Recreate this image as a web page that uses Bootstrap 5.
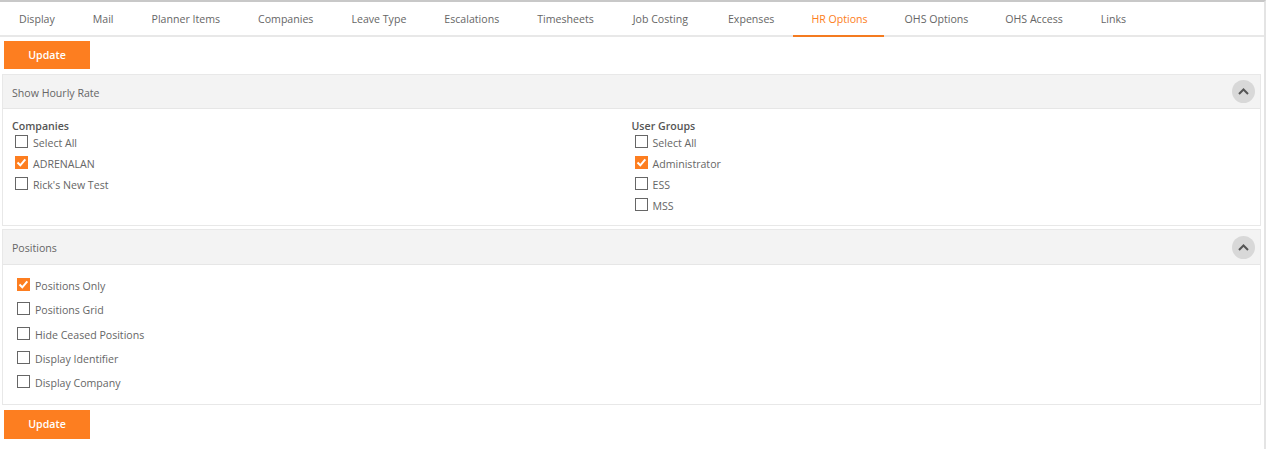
<!DOCTYPE html>
<html lang="en"><head><meta charset="utf-8"><title>HR Options</title>
<link href="https://cdn.jsdelivr.net/npm/bootstrap@5.3.0/dist/css/bootstrap.min.css" rel="stylesheet">
<style>
html,body{height:449px;overflow:hidden;background:#fff}
body{font-family:"Open Sans","Noto Sans",sans-serif;font-size:10.6px;line-height:14px;color:#666;border-top:2px solid #c8c8c8;border-right:2px solid #e4e4e4;width:1266px}
.tabbar{height:35px;border-bottom:2px solid #e8e8e8;flex-wrap:nowrap}
.tabbar .nav-link{height:35px;padding:10px 19px 0;color:#666;font-size:10.6px;border-bottom:2px solid transparent}
.tabbar .nav-link.active{color:#fd7e20;border-bottom-color:#f47b20}
.tabbar .nav-item:nth-child(8){margin-left:1px}
.tabbar .nav-item:nth-child(9){margin-left:2px}
.tabbar .nav-item:nth-child(10) .nav-link{padding-left:18px;padding-right:16px}
.tabbar .nav-item:nth-child(11){margin-left:2px;margin-right:-1px}
.orange-btn{display:block;width:86px;height:28px;margin-left:4px;padding:1px 0 0;border:0;border-radius:0;background:#fd7e20;color:#fff;font-size:10.6px;font-weight:600}
.orange-btn:hover{background:#fd7e20;color:#fff}
.top-btn{margin-top:4px}
.bottom-btn{height:29px;margin-top:5px}
.opt-panel{margin:5px 3px 0 2px;border:1px solid #e8e8e8;border-radius:0}
.opt-panel .card-header{height:34px;padding:0 5px 0 9px;background:#f3f3f3;border-bottom:1px solid #e6e6e6;border-radius:0}
.first-title{padding-top:3px}
.panel-two{margin-top:3px}
.panel-two .card-header{height:35px}
.second-title{padding-top:1px}
.collapse-btn{width:23px;height:23px;border-radius:50%;background:#d8d8d8;border:0;padding:0}
.panel-one-body{height:116px;padding:10px 9px 0}
.panel-two-body{height:139px;padding:13px 14px 0}
.group-title{font-weight:600;color:#555;margin-bottom:2px}
.check-row{display:flex;align-items:flex-start;margin:0}
.panel-one-body .check-row{height:21px;padding-left:3px}
.panel-two-body .check-row{height:24.3px}
.form-check-input[type=checkbox]{width:13px;height:13px;margin:0;border:1px solid #666;border-radius:0;flex:none;box-shadow:none}
.form-check-input[type=checkbox]:checked{background-color:#fd7e20;border-color:#fd7e20;background-size:13px 13px;background-image:url("data:image/svg+xml,%3csvg xmlns='http://www.w3.org/2000/svg' viewBox='0 0 13 13'%3e%3cpath fill='none' stroke='%23fff' stroke-width='2' d='M2.5 6.5l2.8 2.8 5-6'/%3e%3c/svg%3e")}
.check-row label{margin-left:5px;padding-top:1px}
</style></head><body>
<ul class="nav tabbar">
<li class="nav-item"><a class="nav-link" href="#">Display</a></li>
<li class="nav-item"><a class="nav-link" href="#">Mail</a></li>
<li class="nav-item"><a class="nav-link" href="#">Planner Items</a></li>
<li class="nav-item"><a class="nav-link" href="#">Companies</a></li>
<li class="nav-item"><a class="nav-link" href="#">Leave Type</a></li>
<li class="nav-item"><a class="nav-link" href="#">Escalations</a></li>
<li class="nav-item"><a class="nav-link" href="#">Timesheets</a></li>
<li class="nav-item"><a class="nav-link" href="#">Job Costing</a></li>
<li class="nav-item"><a class="nav-link" href="#">Expenses</a></li>
<li class="nav-item"><a class="nav-link active" href="#">HR Options</a></li>
<li class="nav-item"><a class="nav-link" href="#">OHS Options</a></li>
<li class="nav-item"><a class="nav-link" href="#">OHS Access</a></li>
<li class="nav-item"><a class="nav-link" href="#">Links</a></li>
</ul>
<button class="btn orange-btn top-btn">Update</button>
<div class="card opt-panel">
<div class="card-header d-flex align-items-center justify-content-between"><span class="first-title">Show Hourly Rate</span>
<button class="collapse-btn d-flex align-items-center justify-content-center" aria-label="Collapse"><svg width="11" height="7" viewBox="0 0 11 7"><path d="M1 6 L5.5 1.5 L10 6" fill="none" stroke="#555" stroke-width="2"/></svg></button></div>
<div class="panel-one-body row g-0">
<div class="col-6">
<div class="group-title">Companies</div>
<div class="check-row"><input class="form-check-input" type="checkbox" id="c1"><label for="c1">Select All</label></div>
<div class="check-row"><input class="form-check-input" type="checkbox" id="c2" checked><label for="c2">ADRENALAN</label></div>
<div class="check-row"><input class="form-check-input" type="checkbox" id="c3"><label for="c3">Rick's New Test</label></div>
</div>
<div class="col-6">
<div class="group-title">User Groups</div>
<div class="check-row"><input class="form-check-input" type="checkbox" id="u1"><label for="u1">Select All</label></div>
<div class="check-row"><input class="form-check-input" type="checkbox" id="u2" checked><label for="u2">Administrator</label></div>
<div class="check-row"><input class="form-check-input" type="checkbox" id="u3"><label for="u3">ESS</label></div>
<div class="check-row"><input class="form-check-input" type="checkbox" id="u4"><label for="u4">MSS</label></div>
</div>
</div>
</div>
<div class="card opt-panel panel-two">
<div class="card-header d-flex align-items-center justify-content-between"><span class="second-title">Positions</span>
<button class="collapse-btn d-flex align-items-center justify-content-center" aria-label="Collapse"><svg width="11" height="7" viewBox="0 0 11 7"><path d="M1 6 L5.5 1.5 L10 6" fill="none" stroke="#555" stroke-width="2"/></svg></button></div>
<div class="panel-two-body">
<div class="check-row"><input class="form-check-input" type="checkbox" id="p1" checked><label for="p1">Positions Only</label></div>
<div class="check-row"><input class="form-check-input" type="checkbox" id="p2"><label for="p2">Positions Grid</label></div>
<div class="check-row"><input class="form-check-input" type="checkbox" id="p3"><label for="p3">Hide Ceased Positions</label></div>
<div class="check-row"><input class="form-check-input" type="checkbox" id="p4"><label for="p4">Display Identifier</label></div>
<div class="check-row"><input class="form-check-input" type="checkbox" id="p5"><label for="p5">Display Company</label></div>
</div>
</div>
<button class="btn orange-btn bottom-btn">Update</button>
<script src="https://cdn.jsdelivr.net/npm/bootstrap@5.3.0/dist/js/bootstrap.bundle.min.js"></script>
</body></html>
